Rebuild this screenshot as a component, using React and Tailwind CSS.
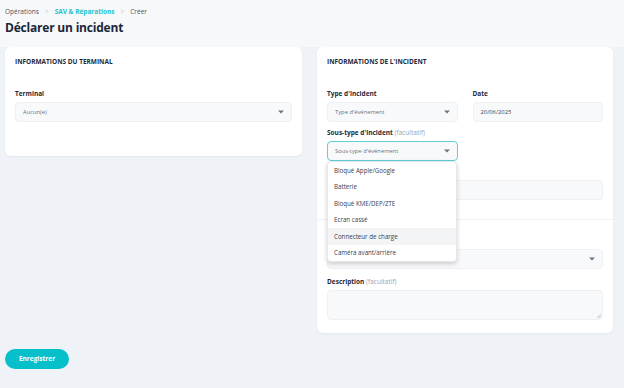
import { useState } from 'react';

const font = { fontFamily: '"Open Sans", "Noto Sans", Arial, sans-serif' };

function Caret() {
  return (
    <svg width="6" height="4" viewBox="0 0 6 4" className="shrink-0">
      <path d="M0 0.5 L6 0.5 L3 3.5 Z" fill="#6b7280" />
    </svg>
  );
}

function Label({ children, optional }) {
  return (
    <div className="h-[10px] text-[6.5px] font-bold text-[#1e2a3b] leading-[10px] mb-[3px]">
      {children}
      {optional && <span className="font-normal text-[#9ca3af]"> (facultatif)</span>}
    </div>
  );
}

function Select({ value, active }) {
  return (
    <div
      className={
        'h-[20px] rounded-[4px] flex items-center justify-between pl-[7px] pr-[7px] ' +
        (active ? 'bg-[#f8f9fb] border border-[#5fd0d8]' : 'bg-[#f8f9fb] border border-[#eef0f3]')
      }
    >
      <span className="text-[5.8px] text-[#6b7280]">{value}</span>
      <Caret />
    </div>
  );
}

function Input({ value }) {
  return (
    <div className="h-[20px] rounded-[4px] bg-[#f8f9fb] border border-[#eef0f3] flex items-center pl-[7px]">
      <span className="text-[5.8px] text-[#374151]">{value}</span>
    </div>
  );
}

const options = [
  'Bloqué Apple/Google',
  'Batterie',
  'Bloqué KME/DEP/ZTE',
  'Ecran cassé',
  'Connecteur de charge',
  'Caméra avant/arrière',
];

export default function App() {
  const [hover] = useState(4);

  return (
    <div className="w-[624px] h-[388px] bg-[#eff3f7] overflow-hidden" style={font}>
      <div className="bg-[#f7f8fa] px-[5px] pt-[7px] h-[47px]">
        <div className="flex items-center text-[6.5px] leading-[10px]">
          <span className="text-[#4b5563]">Opérations</span>
          <span className="text-[#c4c9d0] mx-[6px]">&gt;</span>
          <span className="text-[#1fc1cc] font-bold">SAV &amp; Réparations</span>
          <span className="text-[#c4c9d0] mx-[6px]">&gt;</span>
          <span className="text-[#4b5563]">Créer</span>
        </div>
        <h1 className="mt-[3px] text-[12px] font-bold text-[#1b2638] leading-[16px] tracking-[-0.2px]">
          Déclarer un incident
        </h1>
      </div>

      <div className="flex gap-[15px] px-[5px] items-start">
        <div className="w-[297px] h-[109px] bg-white rounded-[6px] shadow-[0_1px_2px_rgba(0,0,0,0.05)] px-[10px] pt-[10px]">
          <div className="text-[6.5px] font-bold text-[#1e2a3b] uppercase leading-[10px]">
            Informations du terminal
          </div>
          <div className="mt-[22px]">
            <Label>Terminal</Label>
            <Select value="Aucun(e)" />
          </div>
        </div>

        <div className="relative w-[296px] h-[286px] bg-white rounded-[6px] shadow-[0_1px_2px_rgba(0,0,0,0.05)] pt-[10px]">
          <div className="px-[10px]">
            <div className="text-[6.5px] font-bold text-[#1e2a3b] uppercase leading-[10px]">
              Informations de l'incident
            </div>
            <div className="mt-[22px] grid grid-cols-2 gap-x-[15px]">
              <div>
                <Label>Type d'incident</Label>
                <Select value="Type d'événement" />
              </div>
              <div>
                <Label>Date</Label>
                <Input value="20/06/2025" />
              </div>
            </div>
            <div className="mt-[6px] grid grid-cols-2 gap-x-[15px]">
              <div>
                <Label optional>Sous-type d'incident</Label>
                <Select value="Sous-type d'événement" active />
              </div>
            </div>
            <div className="mt-[6px]">
              <Label />
              <Input value="" />
            </div>
          </div>
          <div className="mt-[19px] border-t border-[#f1f3f5]" />
          <div className="px-[10px] mt-[16px]">
            <Label />
            <Select value="" />
            <div className="mt-[8px]">
              <Label optional>Description</Label>
              <div className="relative h-[30px] rounded-[4px] bg-[#f8f9fb] border border-[#eef0f3]">
                <svg width="5" height="5" viewBox="0 0 5 5" className="absolute right-[1px] bottom-[1px]">
                  <path d="M5 1 L1 5 M5 3 L3 5" stroke="#9ca3af" strokeWidth="0.6" />
                </svg>
              </div>
            </div>
          </div>

          <div className="absolute left-[10px] top-[114px] w-[130px] bg-white rounded-[4px] border border-[#e5e7eb] shadow-[0_2px_5px_rgba(0,0,0,0.18)] overflow-hidden">
            {options.map((o, i) => (
              <div
                key={o}
                className={
                  'h-[16.5px] flex items-center pl-[6px] text-[6.2px] text-[#374151] ' +
                  (i === hover ? 'bg-[#f3f4f6]' : '')
                }
              >
                {o}
              </div>
            ))}
          </div>
        </div>
      </div>

      <div className="flex px-[5px] mt-[16px]">
        <button className="w-[64px] h-[20px] rounded-full bg-[#05bfcb] text-white text-[6.5px] font-bold">
          Enregistrer
        </button>
      </div>
    </div>
  );
}
